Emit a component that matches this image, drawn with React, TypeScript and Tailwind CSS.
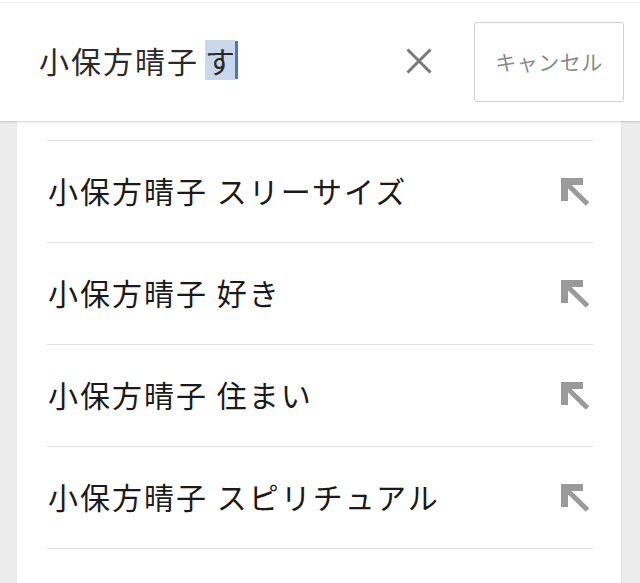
import React from 'react';

const suggestions = [
  '小保方晴子 スリーサイズ',
  '小保方晴子 好き',
  '小保方晴子 住まい',
  '小保方晴子 スピリチュアル',
];

const jp = { fontFamily: '"Noto Sans CJK JP", "Noto Sans", sans-serif' };

const ArrowNW: React.FC = () => (
  <svg width="28" height="28" viewBox="0 0 28 28" className="shrink-0">
    <path d="M0 0H22V7H7V23H0Z" fill="#9a9a9a" />
    <line x1="5" y1="5" x2="26.5" y2="26" stroke="#9a9a9a" strokeWidth="5" />
  </svg>
);

const App: React.FC = () => {
  return (
    <div className="w-[640px] h-[583px] overflow-hidden bg-[#ececec] flex flex-col" style={jp}>
      <div className="bg-white pt-[2px] shadow-[0_1px_2px_rgba(0,0,0,0.18)] z-10">
        <div className="border-t border-[#f0f0f0] h-[119px] flex items-center pl-[39px] pr-[16px]">
          <div className="flex-grow flex items-center text-[30px] text-[#2a2a2a] leading-none -mt-[4px]">
            <span className="tracking-[2px]">小保方晴子</span>
            <span className="w-[6px]" />
            <span className="bg-[#c8d7ea] h-[40px] w-[30px] flex items-center">す</span>
            <span className="w-[3px] h-[38px] bg-[#4b6fd6]" />
          </div>
          <button className="w-[30px] h-[30px] mr-[40px] flex items-center justify-center -mt-[3px]">
            <svg width="26" height="26" viewBox="0 0 26 26">
              <path d="M1.5 1.5L24.5 24.5M24.5 1.5L1.5 24.5" stroke="#7a7a7a" strokeWidth="3" />
            </svg>
          </button>
          <button className="w-[150px] h-[80px] border border-[#cfcfcf] rounded-[3px] text-[21px] tracking-[0.5px] text-[#8a8a8a] bg-white -mt-[1px]">
            キャンセル
          </button>
        </div>
      </div>
      <div className="flex-grow ml-[17px] mr-[18px] bg-white border-r border-[#e2e2e2] pl-[30px] pr-[28px] pt-[19px]">
        {suggestions.map((s) => (
          <div key={s} className="border-t border-[#e0e0e0] h-[102px] flex items-center justify-between pr-[4px]">
            <span className="text-[30px] tracking-[2px] text-[#1a1a1a] leading-none ml-[1px] -mt-[3px]">{s}</span>
            <ArrowNW />
          </div>
        ))}
        <div className="border-t border-[#e0e0e0]" />
      </div>
    </div>
  );
};

export default App;
